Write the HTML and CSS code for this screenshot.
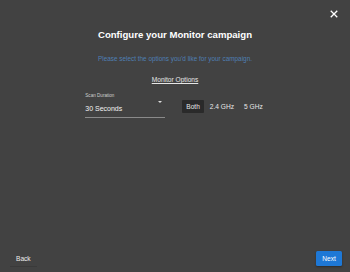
FILE: index.html
```html
<!DOCTYPE html>
<html>
<head>
<meta charset="utf-8">
<link rel="stylesheet" href="styles.css">
</head>
<body>
<div class="dialog">
  <div class="top">
    <button class="close" aria-label="Close">
      <svg width="8" height="8" viewBox="0 0 8 8"><path d="M1.2 1.2L6.8 6.8M6.8 1.2L1.2 6.8" stroke="#fff" stroke-width="1.3" stroke-linecap="square"/></svg>
    </button>
  </div>
  <div class="content">
    <h1 class="title">Configure your Monitor campaign</h1>
    <p class="subtitle">Please select the options you'd like for your campaign.</p>
    <div class="section">Monitor Options</div>
    <div class="options">
      <div class="field">
        <div class="label">Scan Duration</div>
        <div class="select">
          <span class="value">30 Seconds</span>
          <span class="arrow"></span>
        </div>
      </div>
      <div class="toggles">
        <button class="toggle active">Both</button>
        <button class="toggle">2.4 GHz</button>
        <button class="toggle">5 GHz</button>
      </div>
    </div>
  </div>
  <div class="footer">
    <button class="back">Back</button>
    <button class="next">Next</button>
  </div>
</div>
</body>
</html>
```
FILE: styles.css
```css
* { box-sizing: border-box; }
html, body { margin: 0; padding: 0; }
body {
  width: 350px;
  height: 272px;
  background: #424242;
  font-family: "Liberation Sans", Arial, sans-serif;
  color: #fff;
  overflow: hidden;
}
button { font-family: inherit; border: 0; background: none; color: inherit; padding: 0; cursor: pointer; }
.dialog {
  height: 272px;
  display: flex;
  flex-direction: column;
}
.top {
  display: flex;
  justify-content: flex-end;
  padding: 10px 12px 0 0;
  height: 28px;
}
.close { width: 8px; height: 8px; display: flex; }
.content {
  flex: 1;
  display: flex;
  flex-direction: column;
  align-items: center;
}
.title {
  margin: 0;
  font-size: 9.6px;
  font-weight: bold;
  line-height: 14px;
}
.subtitle {
  margin: 13px 0 0;
  font-size: 6.4px;
  line-height: 8px;
  color: #4f7fb3;
}
.section {
  margin-top: 13px;
  font-size: 6.6px;
  line-height: 8px;
  color: #e6e6e6;
  text-decoration: underline;
}
.options {
  margin-top: 9px;
  display: flex;
  align-items: center;
  gap: 17px;
  padding-left: 2px;
}
.field { width: 80px; }
.label { font-size: 4.6px; line-height: 6px; color: #cfcfcf; }
.select {
  margin-top: 5px;
  display: flex;
  justify-content: space-between;
  align-items: flex-start;
  height: 14px;
  border-bottom: 1px solid #8a8a8a;
}
.value { font-size: 7px; line-height: 10px; color: #f2f2f2; }
.arrow {
  margin: -3px 3px 0 0;
  width: 0; height: 0;
  border-left: 2px solid transparent;
  border-right: 2px solid transparent;
  border-top: 2px solid #ddd;
}
.toggles { display: flex; gap: 2px; padding-top: 1px; }
.toggle {
  font-size: 6.6px;
  line-height: 13px;
  padding: 0 4px;
  color: #e8e8e8;
  border-radius: 1px;
}
.toggle.active { background: #2a2a2a; }
.footer {
  display: flex;
  justify-content: space-between;
  align-items: center;
  padding: 0 8px 6px 10px;
}
.back {
  font-size: 6.6px;
  line-height: 15px;
  padding: 0 6px;
  color: #eee;
  box-shadow: 0 1px 0 #3a3a3a;
}
.next {
  font-size: 6.6px;
  line-height: 15px;
  width: 26px;
  background: #1e78d6;
  border-radius: 1.5px;
  color: #fff;
  box-shadow: 0 1px 2px rgba(0,0,0,0.35);
}
```
